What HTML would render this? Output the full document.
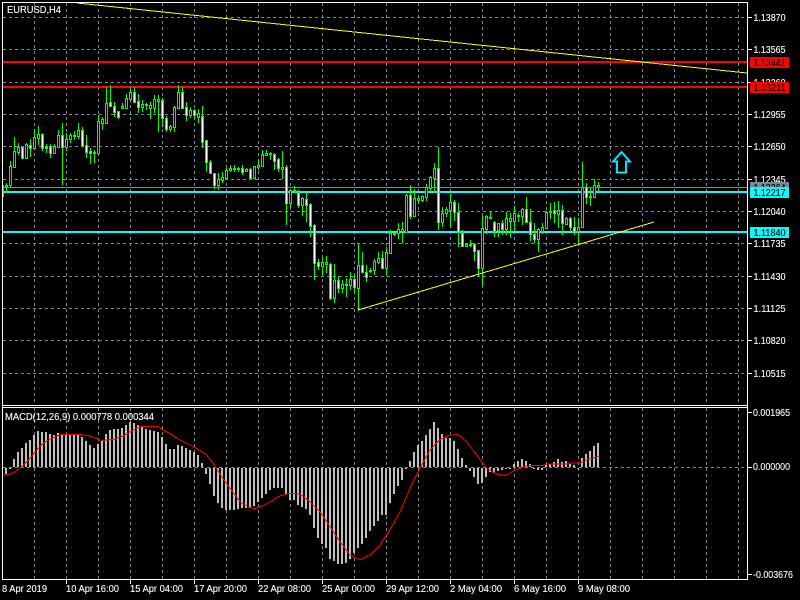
<!DOCTYPE html>
<html>
<head>
<meta charset="utf-8">
<title>EURUSD,H4</title>
<style>
html,body{margin:0;padding:0;background:#000;width:800px;height:600px;overflow:hidden}
svg{display:block}
text{font-family:"Liberation Sans",sans-serif;font-size:10.5px;fill:#fff;stroke:#fff;stroke-width:.12px}
.k{fill:#000;stroke:#000}
</style>
</head>
<body>
<svg id="c" width="800" height="600" viewBox="0 0 800 600" xmlns="http://www.w3.org/2000/svg">
<rect width="800" height="600" fill="#000"/>
<g id="grid" shape-rendering="crispEdges" fill="none" stroke="#778899" stroke-dasharray="3 3"></g>
<g id="lines" shape-rendering="crispEdges">
<rect x="3" y="187" width="744" height="1" fill="#778899"/>
<rect x="3" y="61" width="744" height="2" fill="#f00"/>
<rect x="3" y="86" width="744" height="2" fill="#f00"/>
<rect x="3" y="191" width="744" height="2" fill="#0ff"/>
<rect x="3" y="231" width="744" height="2" fill="#0ff"/>
</g>
<g id="hist" fill="#c0c0c0" shape-rendering="crispEdges"></g>
<g id="cand" shape-rendering="crispEdges"></g>
<g shape-rendering="crispEdges" fill="none" stroke="#ff0">
<line x1="77" y1="3" x2="747" y2="73"/>
<line x1="358" y1="310" x2="654" y2="222"/>
</g>
<polyline id="sig" fill="none" stroke="#f00" shape-rendering="crispEdges"/>
<path d="M621.500 152L630 161.500H626V172.500H617V161.500H613Z" fill="none" stroke="#00bfff" stroke-width="2"/>
<path d="M621.500 152L630 161.500H626V172.500H617V161.500H613Z" fill="none" stroke="#0ff" stroke-width="1"/>
<g shape-rendering="crispEdges" fill="#fff">
<rect x="2" y="2" width="746" height="1"/>
<rect x="2" y="2" width="1" height="578"/>
<rect x="747" y="2" width="1" height="578"/>
<rect x="2" y="405" width="746" height="1"/>
<rect x="2" y="407" width="746" height="1"/>
<rect x="2" y="579" width="746" height="1"/>
<g id="ticks"></g>
</g>
<text x="7" y="13" textLength="54" lengthAdjust="spacingAndGlyphs">EURUSD,H4</text>
<text x="5" y="420" textLength="149" lengthAdjust="spacingAndGlyphs">MACD(12,26,9) 0.000778 0.000344</text>
<g>
<text x="753.500" y="21" textLength="32" lengthAdjust="spacingAndGlyphs">1.13870</text>
<text x="753.500" y="53" textLength="32" lengthAdjust="spacingAndGlyphs">1.13565</text>
<text x="753.500" y="86" textLength="32" lengthAdjust="spacingAndGlyphs">1.13260</text>
<text x="753.500" y="118" textLength="32" lengthAdjust="spacingAndGlyphs">1.12955</text>
<text x="753.500" y="150" textLength="32" lengthAdjust="spacingAndGlyphs">1.12650</text>
<text x="753.500" y="183" textLength="32" lengthAdjust="spacingAndGlyphs">1.12345</text>
<text x="753.500" y="215" textLength="32" lengthAdjust="spacingAndGlyphs">1.12040</text>
<text x="753.500" y="247" textLength="32" lengthAdjust="spacingAndGlyphs">1.11735</text>
<text x="753.500" y="280" textLength="32" lengthAdjust="spacingAndGlyphs">1.11430</text>
<text x="753.500" y="312" textLength="32" lengthAdjust="spacingAndGlyphs">1.11125</text>
<text x="753.500" y="344" textLength="32" lengthAdjust="spacingAndGlyphs">1.10820</text>
<text x="753.500" y="377" textLength="32" lengthAdjust="spacingAndGlyphs">1.10515</text>
<text x="753" y="416" textLength="37" lengthAdjust="spacingAndGlyphs">0.001965</text>
<text x="753" y="470" textLength="37" lengthAdjust="spacingAndGlyphs">0.000000</text>
<text x="753" y="578" textLength="40" lengthAdjust="spacingAndGlyphs">-0.003676</text>
</g>
<rect x="750" y="57" width="39" height="11" fill="#f00"/>
<text class="k" x="753.500" y="66" textLength="32" lengthAdjust="spacingAndGlyphs">1.13441</text>
<rect x="750" y="82" width="39" height="11" fill="#f00"/>
<text class="k" x="753.500" y="91" textLength="32" lengthAdjust="spacingAndGlyphs">1.13211</text>
<rect x="750" y="182" width="39" height="11" fill="#778899"/>
<text class="k" x="753.500" y="191" textLength="32" lengthAdjust="spacingAndGlyphs">1.12264</text>
<rect x="750" y="187" width="39" height="11" fill="#0ff"/>
<text class="k" x="753.500" y="196" textLength="32" lengthAdjust="spacingAndGlyphs">1.12217</text>
<rect x="750" y="227" width="39" height="11" fill="#0ff"/>
<text class="k" x="753.500" y="236" textLength="32" lengthAdjust="spacingAndGlyphs">1.11840</text>
<g>
<text x="2" y="592" textLength="45" lengthAdjust="spacingAndGlyphs">8 Apr 2019</text>
<text x="66" y="592" textLength="53" lengthAdjust="spacingAndGlyphs">10 Apr 16:00</text>
<text x="130" y="592" textLength="53" lengthAdjust="spacingAndGlyphs">15 Apr 04:00</text>
<text x="194" y="592" textLength="53" lengthAdjust="spacingAndGlyphs">17 Apr 20:00</text>
<text x="258" y="592" textLength="53" lengthAdjust="spacingAndGlyphs">22 Apr 08:00</text>
<text x="322" y="592" textLength="53" lengthAdjust="spacingAndGlyphs">25 Apr 00:00</text>
<text x="386" y="592" textLength="53" lengthAdjust="spacingAndGlyphs">29 Apr 12:00</text>
<text x="450" y="592" textLength="52" lengthAdjust="spacingAndGlyphs">2 May 04:00</text>
<text x="514" y="592" textLength="52" lengthAdjust="spacingAndGlyphs">6 May 16:00</text>
<text x="578" y="592" textLength="52" lengthAdjust="spacingAndGlyphs">9 May 08:00</text>
</g>
</svg>
<script>
var NS="http://www.w3.org/2000/svg";
function el(p,n,a){var e=document.createElementNS(NS,n);for(var k in a)e.setAttribute(k,a[k]);document.getElementById(p).appendChild(e);return e}
var i,x,y;
for(x=34;x<747;x+=32){el("grid","line",{x1:x+.5,y1:3,x2:x+.5,y2:405});el("grid","line",{x1:x+.5,y1:408,x2:x+.5,y2:579})}
[17,49,82,114,146,179,211,243,276,308,340,373,467].forEach(function(y){el("grid","line",{x1:3,y1:y+.5,x2:747,y2:y+.5});el("ticks","rect",{x:748,y:y,width:4,height:1})});
[412,574].forEach(function(y){el("ticks","rect",{x:748,y:y,width:4,height:1})});
for(x=66;x<=578;x+=64){el("ticks","rect",{x:x,y:580,width:1,height:4})}
function R(p,x,y,w,h,f){el(p,"rect",{x:x,y:y,width:w,height:Math.max(h,1),fill:f})}
var G="#0f0";
function C(x,t,b,h,l,f,o){
 t=Math.round(t/3)+o;b=Math.round(b/3)+o;h=Math.round(h/3)+o;l=Math.round(l/3)+o;
 R("cand",x,h,1,l-h,G);
 R("cand",x-1,t,3,b-t+1,G);
 if(b-t>1)R("cand",x,t+1,1,b-t-1,f?"#fff":"#000");
}
// top,bottom,high,low,fill(1 white)
var A=[499,556,483,560,0,454,500,411,500,0,442,456,430,465,0,442,473,442,473,1,432,473,430,473,0,436,444,418,472,1,412,444,388,450,0,403,413,378,436,0,403,443,400,453,1,438,445,432,458,1,438,458,432,474,1,438,458,432,462,0,405,440,390,440,0,405,440,370,555,1,418,440,400,452,0,405,418,398,430,0,404,407,392,420,0,390,408,370,418,0,390,438,380,440,1,436,456,405,473,1,454,460,445,492,1,456,460,450,488,0,364,458,346,460,0,358,368,350,390,0,310,368,262,372,0,307,317,255,320,1,319,335,307,350,1,334,350,334,357,1,319,324,308,327,0,294,324,282,327,0,276,296,262,305,0,276,305,262,310,1,304,320,282,340,1,312,320,300,335,0,312,316,308,330,1,316,323,305,357,0,297,323,285,340,0,297,302,285,395,0,300,355,295,380,1,354,387,348,395,1,378,387,375,395,0,321,380,318,395,0,276,323,255,325,0,276,323,262,325,1,322,345,305,362,1,330,345,322,355,0,330,344,326,358,1,340,350,327,370,0,348,425,318,445,1,421,485,420,515,1,485,520,480,523,1,520,556,520,568,1,538,555,520,570,0,530,540,515,548,0,510,535,505,538,0,503,510,495,515,0,503,507,495,516,0,503,508,500,516,0,505,517,495,525,1,507,512,505,513,0,507,533,505,535,1,499,535,498,538,0,495,500,480,510,0,463,498,450,500,0,460,466,450,468,0];
var B=[68,73,65,90,0,72,92,70,120,1,88,115,85,125,1,112,116,63,148,0,112,220,105,285,1,181,220,180,235,0,180,184,168,190,0,185,224,180,233,1,204,224,200,258,0,208,224,190,275,1,222,287,220,320,1,286,398,283,450,1,396,407,388,420,1,396,407,385,435,0,397,403,378,430,0,402,503,400,510,1,450,503,402,520,0,450,473,438,490,1,462,473,450,490,0,462,464,443,500,0,448,465,426,480,0,448,470,430,488,1,405,473,340,542,0,404,425,365,428,1,427,440,405,456,1,420,423,415,428,0,393,420,388,435,0,385,397,366,402,0,385,415,362,418,1,366,413,352,435,0,310,368,300,370,0,308,312,305,318,0,298,310,280,326,0,298,304,275,338,0,196,305,193,310,0,196,258,166,266,1,205,258,178,262,0,205,209,195,222,0,198,209,195,215,0,172,200,163,212,0,142,173,138,185,0,115,143,98,190,0,115,275,52,300,1,250,275,232,290,0,238,250,232,262,0,217,240,193,290,0,217,245,210,273,1,245,305,220,350,1,305,347,300,350,1,343,347,338,352,0,342,345,330,352,0,343,362,338,392,1,361,413,361,437,1,295,413,258,466,0,258,298,255,312,0,260,263,243,268,0,277,302,272,320,1,280,300,278,320,0,280,298,270,315,1,265,298,245,315,0,265,272,248,325,0,250,272,228,305,0,254,258,250,275,0,236,258,235,285,0,236,275,202,280,1,275,313,238,332,1,313,328,280,340,1,298,328,295,365,0,292,302,280,312,0,245,295,243,298,0,243,247,218,268,0,241,250,215,280,1,240,252,213,295,0,240,280,225,315,1,265,282,262,285,0,265,290,262,305,1,290,302,262,315,1,290,302,265,345,0,170,292,97,295,0,172,200,160,222,1,197,200,170,228,0,166,202,148,205,0,166,170,156,182,0];
R("cand",3,185,1,12,G);
R("cand",6,183,1,10,G);R("cand",5,185,3,2,G);
for(i=0;i<A.length;i+=5)C(10+4*i/5,A[i],A[i+1],A[i+2],A[i+3],A[i+4],0);
for(i=0;i<B.length;i+=5)C(270+4*i/5,B[i],B[i+1],B[i+2],B[i+3],B[i+4],130);
// histogram tops in zoom units (from x=6, step 4)
var H=[218,203,177,155,143,128,120,104,93,96,96,102,106,99,105,105,105,105,106,112,123,135,145,132,120,102,90,87,87,84,74,67,70,75,82,87,90,92,95,110,132,147,147,135,139,145,150,155,165,189,218,250,285,305,322,327,327,327,325,320,320,322,315,303,290,278,
266,260,260,262,280,298,298,312,318,323,342,380,410,430,442,473,480,488,490,485,475,456,442,428,412,390,375,360,342,342,305,280,255,237,205,183,155,135,122,104,87,67,85,103,113,115,122,147,174,195,210,228,250,245,228,212,215,210,208,204,203,192,184,178,182,193,203,207,
207,195,192,187,177,185,183,192,195,200,175,162,153,139,129];
for(i=0;i<H.length;i++){
 x=6+4*i;y=400+H[i]/3;y=Math.round(y);
 if(y<467)R("hist",x-1,y,2,467-y,"#c0c0c0");else R("hist",x-1,468,2,Math.max(y-467,1),"#c0c0c0");
}
var S1=[8,226,25,224,45,216,65,200,90,175,110,150,130,130,150,118,180,104,240,103,270,108,305,122,340,118,370,108,400,90,425,79,470,79,500,95,540,120,580,140,615,160,640,190,665,230,690,265,720,305,745,320,765,326,790,316],
S2=[0,306,30,287,60,280,90,282,120,305,150,335,180,380,210,425,240,465,270,479,300,465,330,435,360,390,390,335,420,265,450,205,480,150,510,118,540,105,565,104,590,125,620,165,650,205,680,222,705,227,730,214,760,200,785,196],
S3=[0,197,40,197,45,192,110,192,120,189,150,189,170,180,205,169],pts=[];
function P(a,o){for(var j=0;j<a.length;j+=2)pts.push((o+a[j]/3).toFixed(1)+","+(400+a[j+1]/3).toFixed(1))}
P(S1,0);P(S2,270);P(S3,530);
document.getElementById("sig").setAttribute("points",pts.join(" "));
</script>
</body>
</html>
